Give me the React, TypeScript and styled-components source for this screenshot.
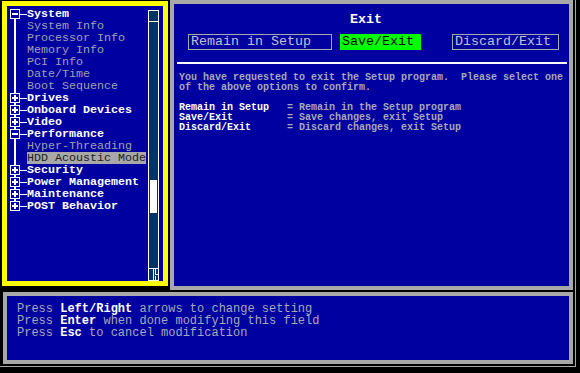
import React from 'react';
import styled, { createGlobalStyle } from 'styled-components';

const BLUE = '#0000a0';
const FRAME_GRAY = '#a8a8a8';
const TEXT_GRAY = '#a8a8b8';
const SUB_GRAY = '#a0a0b0';
const YELLOW = '#ffff00';

const Global = createGlobalStyle`
  html, body { margin: 0; padding: 0; background: #000; }
  body { font-family: "Liberation Mono", "DejaVu Sans Mono", monospace; }
`;

const Screen = styled.div`
  width: 576px;
  height: 367px;
  box-sizing: border-box;
  border-right: 1px solid ${FRAME_GRAY};
  border-bottom: 1px solid ${FRAME_GRAY};
  display: flex;
  flex-direction: column;
`;

const TopRow = styled.div`
  display: flex;
  align-items: flex-start;
`;

const TreePanel = styled.div`
  box-sizing: border-box;
  width: 166px;
  height: 285px;
  margin: 1px 0 0 2px;
  border: 5px solid ${YELLOW};
  background: ${BLUE};
  display: flex;
  align-items: stretch;
`;

const Tree = styled.div`
  flex: 1;
  padding-top: 2px;
  display: flex;
  flex-direction: column;
`;

const Row = styled.div`
  display: flex;
  align-items: center;
  height: 12px;
  font-size: 11.67px;
  line-height: 12px;
  white-space: pre;
`;

const Label = styled.span<{ $kind: 'top' | 'sub'; $selected?: boolean }>`
  display: inline-block;
  height: 12px;
  color: ${(p) => (p.$selected ? '#202020' : p.$kind === 'top' ? '#ffffff' : SUB_GRAY)};
  background: ${(p) => (p.$selected ? '#a8a8a8' : 'transparent')};
  font-weight: ${(p) => (p.$kind === 'top' ? 700 : 400)};
`;

const Scrollbar = styled.div`
  box-sizing: border-box;
  width: 11px;
  margin: 4px 4px 0 0;
  border: 1px solid #ffffff;
  border-bottom: none;
  background: #003366;
  display: flex;
  flex-direction: column;
`;

const ScrollCap = styled.div`
  height: 10px;
  border-bottom: 1px solid #ffffff;
`;

const ScrollTrack = styled.div`
  flex: 1;
  display: flex;
  flex-direction: column;
  align-items: center;
`;

const Thumb = styled.div`
  width: 7px;
  height: 33px;
  background: #ffffff;
`;

const ScrollEnd = styled.div`
  height: 11px;
  border-top: 1px solid #ffffff;
  border-bottom: 1px solid #ffffff;
  position: relative;
  svg { position: absolute; left: 0; top: 0; overflow: visible; }
`;

const InfoPanel = styled.div`
  box-sizing: border-box;
  width: 403px;
  height: 290px;
  margin-left: 2px;
  border: 4px solid ${FRAME_GRAY};
  background: ${BLUE};
  display: flex;
  flex-direction: column;
`;

const Title = styled.div`
  padding: 8px 11px 0 0;
  text-align: center;
  color: #ffffff;
  font-weight: 700;
  font-size: 13.33px;
  line-height: 16px;
`;

const ButtonRow = styled.div`
  display: flex;
  margin-top: 6px;
  padding-left: 14px;
`;

const ChoiceButton = styled.div<{ $w: number; $ml: number; $active?: boolean }>`
  box-sizing: border-box;
  width: ${(p) => p.$w}px;
  height: 16px;
  margin-left: ${(p) => p.$ml}px;
  padding-left: ${(p) => (p.$active ? 1 : 2)}px;
  border: 1px solid ${(p) => (p.$active ? '#00ff00' : FRAME_GRAY)};
  background: ${(p) => (p.$active ? '#00ff00' : 'transparent')};
  color: ${(p) => (p.$active ? '#000000' : '#c0c0d8')};
  font-size: 13.33px;
  line-height: 14px;
  white-space: pre;
`;

const Divider = styled.div`
  height: 2px;
  margin: 12px 2px 0 3px;
  background: #ffffff;
`;

const Body = styled.div`
  padding: 9px 0 0 5px;
  font-size: 10px;
  line-height: 10px;
  font-weight: 700;
  color: ${TEXT_GRAY};
`;

const Para = styled.div`
  white-space: pre;
`;

const DefGrid = styled.div`
  display: grid;
  grid-template-columns: 108px auto;
  margin-top: 10px;
  white-space: pre;
`;

const DefTerm = styled.span`
  color: #ffffff;
`;

const HelpPanel = styled.div`
  box-sizing: border-box;
  width: 570px;
  height: 72px;
  margin: 2px 0 0 3px;
  border: 4px solid ${FRAME_GRAY};
  background: ${BLUE};
  padding: 7px 0 0 10px;
  font-size: 12px;
  line-height: 12px;
  color: ${TEXT_GRAY};
  white-space: pre;
`;

const Key = styled.b`
  color: #ffffff;
  font-weight: 700;
`;

type Node = { label: string; kind: 'top' | 'sub'; box?: 'plus' | 'minus'; selected?: boolean };

const nodes: Node[] = [
  { label: 'System', kind: 'top', box: 'minus' },
  { label: 'System Info', kind: 'sub' },
  { label: 'Processor Info', kind: 'sub' },
  { label: 'Memory Info', kind: 'sub' },
  { label: 'PCI Info', kind: 'sub' },
  { label: 'Date/Time', kind: 'sub' },
  { label: 'Boot Sequence', kind: 'sub' },
  { label: 'Drives', kind: 'top', box: 'plus' },
  { label: 'Onboard Devices', kind: 'top', box: 'plus' },
  { label: 'Video', kind: 'top', box: 'plus' },
  { label: 'Performance', kind: 'top', box: 'minus' },
  { label: 'Hyper-Threading', kind: 'sub' },
  { label: 'HDD Acoustic Mode', kind: 'sub', selected: true },
  { label: 'Security', kind: 'top', box: 'plus' },
  { label: 'Power Management', kind: 'top', box: 'plus' },
  { label: 'Maintenance', kind: 'top', box: 'plus' },
  { label: 'POST Behavior', kind: 'top', box: 'plus' },
];

function Gutter({ node, first, last }: { node: Node; first: boolean; last: boolean }) {
  const top = first ? 6 : 0;
  const bottom = last ? 6 : 12;
  return (
    <svg width="20" height="12" viewBox="0 0 20 12" shapeRendering="crispEdges">
      <rect x="7" y={top} width="2" height={bottom - top} fill="#fff" />
      {node.box && (
        <>
          <rect x="3.5" y="1.5" width="9" height="9" fill={BLUE} stroke="#fff" strokeWidth="1" />
          <rect x="5" y="5" width="6" height="2" fill="#fff" />
          {node.box === 'plus' && <rect x="7" y="3" width="2" height="6" fill="#fff" />}
          <rect x="13" y="6" width="7" height="1" fill="#fff" />
        </>
      )}
    </svg>
  );
}

export default function App() {
  const thumbTop = 158;
  return (
    <>
      <Global />
      <Screen>
        <TopRow>
          <TreePanel>
            <Tree>
              {nodes.map((n, i) => (
                <Row key={n.label}>
                  <Gutter node={n} first={i === 0} last={i === nodes.length - 1} />
                  <Label $kind={n.kind} $selected={n.selected}>
                    {n.label}
                  </Label>
                </Row>
              ))}
            </Tree>
            <Scrollbar>
              <ScrollCap />
              <ScrollTrack>
                <Thumb style={{ marginTop: thumbTop }} />
              </ScrollTrack>
              <ScrollEnd>
                <svg width="9" height="11" shapeRendering="crispEdges">
                  <rect x="4" y="0" width="1" height="16" fill="#fff" />
                  <rect x="6" y="0" width="1" height="5" fill="#fff" />
                  <rect x="6" y="5" width="3" height="1" fill="#fff" />
                  <rect x="6" y="7" width="1" height="9" fill="#fff" />
                </svg>
              </ScrollEnd>
            </Scrollbar>
          </TreePanel>
          <InfoPanel>
            <Title>Exit</Title>
            <ButtonRow>
              <ChoiceButton $w={144} $ml={0}>Remain in Setup</ChoiceButton>
              <ChoiceButton $w={81} $ml={8} $active>Save/Exit</ChoiceButton>
              <ChoiceButton $w={107} $ml={31}>Discard/Exit</ChoiceButton>
            </ButtonRow>
            <Divider />
            <Body>
              <Para>{'You have requested to exit the Setup program.  Please select one'}</Para>
              <Para>{'of the above options to confirm.'}</Para>
              <DefGrid>
                <DefTerm>Remain in Setup</DefTerm>
                <span>= Remain in the Setup program</span>
                <DefTerm>Save/Exit</DefTerm>
                <span>= Save changes, exit Setup</span>
                <DefTerm>Discard/Exit</DefTerm>
                <span>= Discard changes, exit Setup</span>
              </DefGrid>
            </Body>
          </InfoPanel>
        </TopRow>
        <HelpPanel>
          <div>Press <Key>Left/Right</Key> arrows to change setting</div>
          <div>Press <Key>Enter</Key> when done modifying this field</div>
          <div>Press <Key>Esc</Key> to cancel modification</div>
        </HelpPanel>
      </Screen>
    </>
  );
}
